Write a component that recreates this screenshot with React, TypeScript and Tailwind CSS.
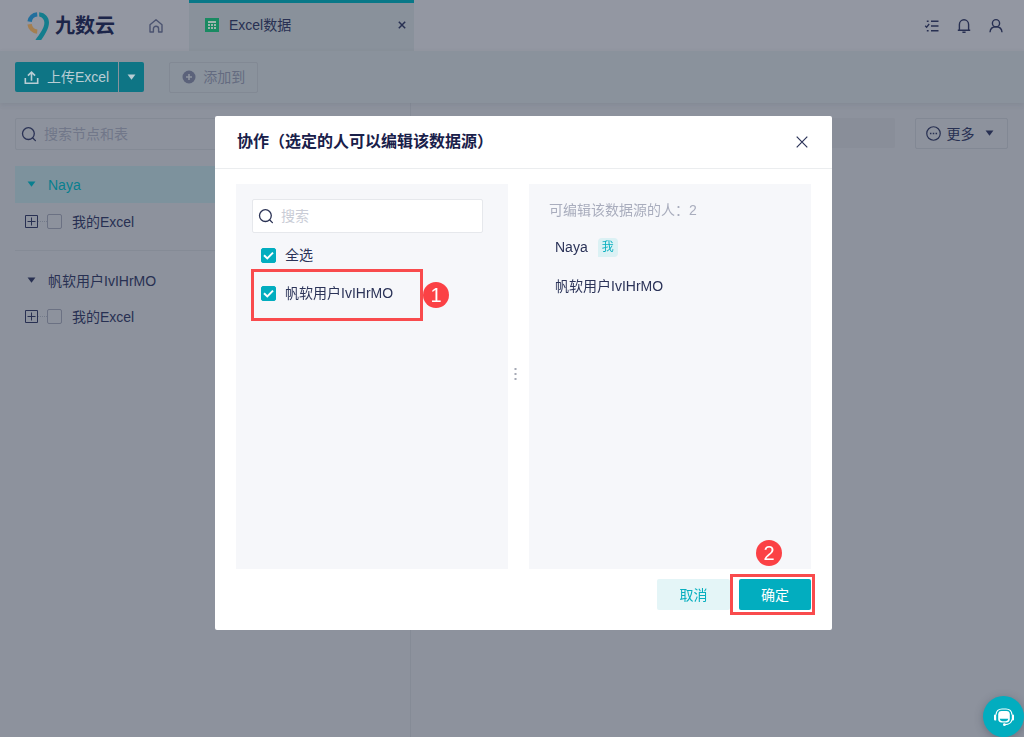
import type { ReactNode } from "react";

function Caret({ className = "" }: { className?: string }) {
  return (
    <svg viewBox="0 0 10 8" className={`h-[7px] w-[9px] shrink-0 fill-current ${className}`} aria-hidden="true">
      <path d="M0.5 0.5H9.5L5 6.7Z" />
    </svg>
  );
}

function SearchIcon() {
  return (
    <svg viewBox="0 0 16 16" className="size-4 shrink-0 text-[#2b3355]" fill="none" stroke="currentColor" strokeWidth="1.3" strokeLinecap="round" aria-hidden="true">
      <circle cx="7.4" cy="7.6" r="5.9" />
      <path d="M11.8 12L14.4 14.6" />
    </svg>
  );
}

function Logo() {
  return (
    <a href="#" className="flex items-center gap-[5px] text-[#1c2549]">
      <svg viewBox="0 0 24 30" className="h-[30px] w-6" fill="none" aria-hidden="true">
        <path d="M3.6 10.6A8.4 8.4 0 0 1 11.2 3.4" stroke="#226f9d" strokeWidth="4.4" />
        <path d="M3.6 13.2A8.4 8.4 0 0 0 11.2 20.6" stroke="#a47f50" strokeWidth="4.4" />
        <path d="M13.2 1.2C19.4 1.8 23 6.2 23 11.6C23 17.6 18.4 24.6 15.2 29H9.4C13.4 23.4 18.4 17.2 18.4 11.8C18.4 8.6 16.4 6.2 13.2 5.6Z" fill="#147d8d" />
      </svg>
      <span className="text-xl leading-7 font-bold">九数云</span>
    </a>
  );
}

function Header() {
  return (
    <header className="flex h-[51px] shrink-0 bg-[#9397a2] text-[#283052]">
      <div className="flex w-[189px] items-center pl-[26px]">
        <Logo />
        <button type="button" aria-label="首页" className="ml-[33px]">
          <svg viewBox="0 0 16 16" className="size-4 text-[#4b5370]" fill="none" stroke="currentColor" strokeWidth="1.4" strokeLinejoin="round" aria-hidden="true">
            <path d="M2 6.8L8 1.8L14 6.8V14H10.6V10.8A2.6 2.6 0 0 0 5.4 10.8V14H2Z" />
          </svg>
        </button>
      </div>
      <div className="flex w-[225px] items-center border-t-[3px] border-[#087888] bg-[#89919b] pr-[7px] pb-1 pl-4">
        <svg viewBox="0 0 14 14" className="size-[14px]" aria-hidden="true">
          <path fill="#198a62" d="M0 0H14V14H0Z" />
          <path fill="#9fb5ae" d="M3 3H11V5H3ZM3 6H5V8H3ZM6 6H8V8H6ZM9 6H11V8H9ZM3 9H5V11H3ZM6 9H8V11H6ZM9 9H11V11H9Z" />
        </svg>
        <span className="ml-[10px] flex-1 text-sm">Excel数据</span>
        <button type="button" aria-label="关闭标签" className="p-[1px]">
          <svg viewBox="0 0 8 8" className="size-2" stroke="currentColor" strokeWidth="1.5" aria-hidden="true">
            <path d="M0.8 0.8L7.2 7.2M7.2 0.8L0.8 7.2" />
          </svg>
        </button>
      </div>
      <nav className="ml-auto flex items-center gap-4 pr-5">
        <button type="button" aria-label="任务">
          <svg viewBox="0 0 16 16" className="size-4" fill="none" stroke="currentColor" strokeWidth="1.5" aria-hidden="true">
            <path d="M7 3.2H14.5M7 8H14.5M7 12.8H14.5M2.8 3.2H4.6M2.8 12.8H4.6" />
            <path d="M1.2 7.8L2.6 9.2L5.2 6" strokeWidth="1.3" />
          </svg>
        </button>
        <button type="button" aria-label="通知">
          <svg viewBox="0 0 16 16" className="size-4" fill="none" stroke="currentColor" strokeWidth="1.4" aria-hidden="true">
            <path d="M3.4 12V6.4A4.6 4.6 0 0 1 12.6 6.4V12M1.8 12.2H14.2M6.4 14.3H9.6" />
          </svg>
        </button>
        <button type="button" aria-label="账户">
          <svg viewBox="0 0 16 16" className="size-4" fill="none" stroke="currentColor" strokeWidth="1.4" aria-hidden="true">
            <circle cx="8" cy="5.2" r="3.6" />
            <path d="M2 14.2C2.2 11 4.6 8.8 8 8.8S13.8 11 14 14.2" />
          </svg>
        </button>
      </nav>
    </header>
  );
}

function Toolbar() {
  return (
    <div className="relative flex h-[52px] shrink-0 items-center bg-[#8a929c] px-[15px] text-sm shadow-[0_2px_5px_rgba(60,70,90,0.12)]">
      <div className="flex h-[30px] gap-px text-[#b9cdd4]">
        <button type="button" className="flex items-center gap-2 rounded-l-[2px] bg-[#0e7585] px-[9px]">
          <svg viewBox="0 0 16 16" className="size-[15px]" fill="none" stroke="currentColor" strokeWidth="1.7" aria-hidden="true">
            <path d="M1.4 8.4V14.2H14.6V8.4M8 11.4V2.4M4.2 6L8 2.2L11.8 6" />
          </svg>
          上传Excel
        </button>
        <button type="button" aria-label="更多上传方式" className="flex w-[25px] items-center justify-center rounded-r-[2px] bg-[#0e7585]">
          <Caret />
        </button>
      </div>
      <button type="button" className="ml-[25px] flex h-[31px] items-center gap-[7px] rounded-[2px] border border-[#828994] px-3 text-[#646b80]">
        <svg viewBox="0 0 14 14" className="size-[14px]" aria-hidden="true">
          <circle cx="7" cy="7" r="6.5" fill="#5b627a" />
          <path d="M7 4V10M4 7H10" stroke="#8f959f" strokeWidth="1.6" />
        </svg>
        添加到
      </button>
    </div>
  );
}

function TreeItem({ id }: { id: string }) {
  return (
    <div className="flex h-[37px] items-center pl-[10px]">
      <button type="button" aria-label="展开">
        <svg viewBox="0 0 13 13" className="size-[13px]" fill="none" stroke="currentColor" aria-hidden="true">
          <path d="M0.5 0.5H12.5V12.5H0.5ZM2.5 6.5H10.5M6.5 2.5V10.5" />
        </svg>
      </button>
      <span className="w-[9px] border-t border-dotted border-[#747b8a]" />
      <input id={id} type="checkbox" className="size-[15px] appearance-none rounded-[2px] border border-[#6b7183]" />
      <label htmlFor={id} className="ml-[10px]">我的Excel</label>
    </div>
  );
}

function Sidebar() {
  return (
    <aside className="flex w-[411px] shrink-0 flex-col border-r border-[#858b96] pt-[15px] pl-[15px] text-sm">
      <label className="mr-4 flex h-8 items-center gap-[7px] rounded-[2px] border border-[#848a95] px-[5px]">
        <SearchIcon />
        <input aria-label="搜索节点和表" placeholder="搜索节点和表" className="min-w-0 flex-1 bg-transparent outline-none placeholder:text-[#717789]" />
      </label>
      <button type="button" className="mt-4 flex h-[37px] shrink-0 items-center gap-3 bg-[#7d929d] pl-3 text-[#087f8f]">
        <Caret />
        Naya
      </button>
      <TreeItem id="tree-mine" />
      <hr className="mt-[10px] border-[#858b96]" />
      <button type="button" className="mt-3 flex h-[35px] shrink-0 items-center gap-3 pl-3">
        <Caret />
        帆软用户IvIHrMO
      </button>
      <TreeItem id="tree-shared" />
    </aside>
  );
}

function Marker({ children, className }: { children: ReactNode; className: string }) {
  return (
    <span className={`pointer-events-none absolute flex size-[26px] items-center justify-center rounded-full bg-[#fb4145] text-xl text-white ${className}`}>
      {children}
    </span>
  );
}

function CheckRow({ id, label }: { id: string; label: string }) {
  return (
    <div className="flex items-center gap-[9px]">
      <span className="relative flex size-[15px]">
        <input id={id} type="checkbox" defaultChecked className="peer size-[15px] appearance-none rounded-[2px] border border-[#b5bac6] checked:border-[#02adbf] checked:bg-[#02adbf]" />
        <svg viewBox="0 0 15 15" className="pointer-events-none absolute inset-0 hidden size-[15px] peer-checked:block" fill="none" stroke="white" strokeWidth="2" aria-hidden="true">
          <path d="M3 7.3L6.3 10.4L12 4.6" />
        </svg>
      </span>
      <label htmlFor={id} className="text-sm">{label}</label>
    </div>
  );
}

function ShareDialog() {
  return (
    <div className="fixed inset-0 flex items-center justify-center pt-[9px] pl-[23px]">
      <section role="dialog" aria-labelledby="share-title" className="flex w-full max-w-[617px] flex-col rounded-[2px] bg-white text-[#2b3358]">
        <div className="flex h-[53px] items-center justify-between border-b border-[#ebedef] pr-6 pl-[22px]">
          <h2 id="share-title" className="text-base font-bold text-[#19204a]">协作（选定的人可以编辑该数据源）</h2>
          <button type="button" aria-label="关闭">
            <svg viewBox="0 0 12 12" className="size-3" stroke="currentColor" strokeWidth="1.2" aria-hidden="true">
              <path d="M0.7 0.7L11.3 11.3M11.3 0.7L0.7 11.3" />
            </svg>
          </button>
        </div>
        <div className="flex h-[400px] px-[21px] pt-[15px]">
          <div className="flex min-w-0 flex-1 flex-col bg-[#f6f7fa] pt-[15px] pl-[15px]">
            <label className="mr-[25px] ml-px flex h-[34px] items-center gap-[7px] rounded-[2px] border border-[#e6e8ec] bg-white px-[5px]">
              <SearchIcon />
              <input aria-label="搜索" placeholder="搜索" className="min-w-0 flex-1 bg-transparent text-sm outline-none placeholder:text-[#c9ccd6]" />
            </label>
            <div className="mt-3 pl-[10px]">
              <CheckRow id="pick-all" label="全选" />
            </div>
            <div className="relative mt-1 flex h-[52px] w-[172px] items-center border-[3px] border-[#f94b4d] pb-1 pl-[7px]">
              <CheckRow id="pick-user" label="帆软用户IvIHrMO" />
              <Marker className="top-[10px] left-[169px]">1</Marker>
            </div>
          </div>
          <div className="flex w-[21px] shrink-0 items-center justify-center pr-[6px] pb-[5px]">
            <svg viewBox="0 0 3 14" className="h-[14px] w-[3px] fill-[#a6aab6]" aria-hidden="true">
              <path d="M0.5 1H2.5V3H0.5ZM0.5 6H2.5V8H0.5ZM0.5 11H2.5V13H0.5Z" />
            </svg>
          </div>
          <div className="flex w-[282px] shrink-0 flex-col bg-[#f6f7fa] pt-4 pl-5 text-sm">
            <p className="text-[#a9adbd]">可编辑该数据源的人：2</p>
            <ul className="mt-[7px] pl-[6px]">
              <li className="flex h-10 items-center gap-[10px]">
                Naya
                <span className="rounded-t-[4px] rounded-br-[4px] bg-[#dbf1f4] px-1 text-xs leading-[19px] text-[#08afbf]">我</span>
              </li>
              <li className="flex h-[37px] items-center">帆软用户IvIHrMO</li>
            </ul>
          </div>
        </div>
        <div className="flex items-start justify-end pt-[5px] pr-[17px] pb-[15px] text-sm">
          <button type="button" className="mt-[5px] h-[31px] w-[73px] rounded-[2px] bg-[#e4f5f7] text-[#08afbf]">取消</button>
          <div className="relative flex h-[41px] border-[3px] border-[#f94b4d] py-[2px] pr-[1px] pl-[6px]">
            <button type="button" className="h-[31px] w-[72px] rounded-[2px] bg-[#02adbf] text-white">确定</button>
            <Marker className="-top-[37px] left-[23px]">2</Marker>
          </div>
        </div>
      </section>
    </div>
  );
}

export default function App() {
  return (
    <div className="flex min-h-screen flex-col bg-[#8d929d] font-['Liberation_Sans','Noto_Sans_CJK_SC',sans-serif] text-[#283052]">
      <Header />
      <Toolbar />
      <main className="flex flex-1">
        <Sidebar />
        <div className="flex flex-1 items-start justify-end gap-5 pt-[15px] pr-4">
          <div className="h-[30px] flex-1 rounded-[2px] bg-[#898e99]" />
          <button type="button" className="flex h-[31px] w-[93px] items-center justify-center gap-[6px] rounded-[2px] border border-[#828894] pr-1 text-sm">
            <svg viewBox="0 0 16 16" className="size-[15px]" fill="none" stroke="currentColor" strokeWidth="1.3" aria-hidden="true">
              <circle cx="8" cy="8" r="7.2" />
              <path d="M4.2 8H5.8M7.2 8H8.8M10.2 8H11.8" strokeWidth="1.6" />
            </svg>
            更多
            <Caret className="ml-1" />
          </button>
        </div>
      </main>
      <ShareDialog />
      <button type="button" aria-label="在线客服" className="fixed right-0 bottom-0 flex size-[41px] items-center justify-center rounded-full bg-[#02adbf] shadow-[0_2px_8px_rgba(40,50,70,0.35)]">
        <svg viewBox="0 0 22 20" className="h-5 w-[22px]" fill="none" aria-hidden="true">
          <path d="M3 7.6C3.4 3.8 6 2 9 2H13C16 2 18.6 3.8 19 7.6M19 12.5C18.4 15.8 16 17.5 12 17.7" stroke="white" strokeWidth="1.2" />
          <path d="M1 8.4Q1 7.4 2 7.4H3.2V13.4H2Q1 13.4 1 12.4ZM18.8 7.4H20Q21 7.4 21 8.4V12.4Q21 13.4 20 13.4H18.8Z" fill="white" />
          <path d="M5.2 7.4Q5.2 4 8.6 4H13.4Q16.8 4 16.8 7.4V12Q16.8 15.4 13.4 15.4H8.6Q5.2 15.4 5.2 12Z" fill="white" />
          <path d="M6.6 11.8H15.4Q15 14.2 12.6 14.2H9.4Q7 14.2 6.6 11.8Z" fill="#02adbf" />
          <circle cx="11.4" cy="17.7" r="1.4" fill="white" />
        </svg>
      </button>
    </div>
  );
}
